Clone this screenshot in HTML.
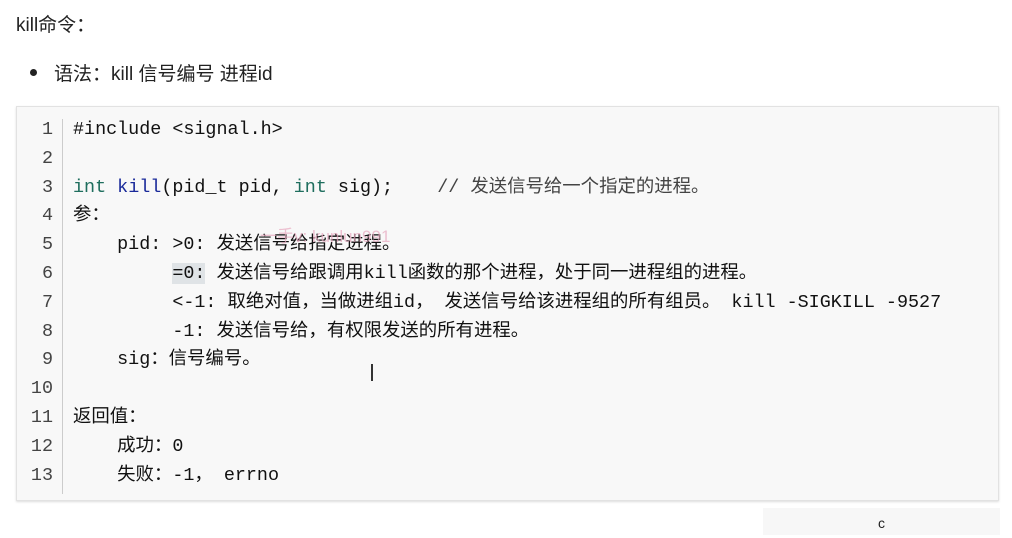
<!DOCTYPE html>
<html><head><meta charset="utf-8"><style>
body{margin:0;width:1012px;height:535px;background:#fff;position:relative;overflow:hidden;font-family:"Liberation Sans","Noto Sans CJK SC",sans-serif;color:#222}
.t{position:absolute;left:16px;top:10px;font-size:19px}
.b{position:absolute;left:30px;top:59px;font-size:19px}
.b:before{content:"";position:absolute;left:0;top:10px;width:7px;height:7px;border-radius:50%;background:#222}
.b span{margin-left:24px}
.code{position:absolute;left:16px;top:106px;width:981px;height:393px;background:#f8f8f8;border:1px solid #e2e2e2;box-shadow:0 1px 2px #ddd}
.gut{position:absolute;left:45px;top:12px;width:1px;height:375px;background:#ccc}
.ln,.lc{position:absolute;font-family:"Liberation Mono","Noto Sans CJK SC",monospace;font-size:18.4px;line-height:28.8px;white-space:pre;top:9px;color:#111}
.ln{left:0;width:36px;text-align:right;color:#444}
.lc{left:56px}
.k{color:#1f6e5e}.f{color:#1a2a9a}.c{color:#444}
.hl{background:#dfe3e6}
.wm{position:absolute;left:260px;top:222px;color:#e7a8bf;font-size:17px;opacity:.7}
.cur{position:absolute;left:371px;top:364px;width:2px;height:17px;background:#333}
.bt{position:absolute;left:763px;top:508px;width:237px;height:27px;background:#f7f7f7;font-size:14px;text-align:center;line-height:30px}
</style></head><body>
<div class="t">kill命令：</div>
<div class="b"><span>语法：kill 信号编号 进程id</span></div>
<div class="code"><div class="gut"></div>
<div class="ln">1
2
3
4
5
6
7
8
9
10
11
12
13</div>
<div class="lc">#include &lt;signal.h&gt;

<span class="k">int</span> <span class="f">kill</span>(pid_t pid, <span class="k">int</span> sig);    <span class="c">// 发送信号给一个指定的进程。</span>
参：
    pid: &gt;0: 发送信号给指定进程。
         <span class="hl">=0:</span> 发送信号给跟调用kill函数的那个进程，处于同一进程组的进程。
         &lt;-1: 取绝对值，当做进组id， 发送信号给该进程组的所有组员。 kill -SIGKILL -9527
         -1: 发送信号给，有权限发送的所有进程。
    sig：信号编号。

返回值：
    成功：0
    失败：-1， errno</div></div>
<div class="wm">一手v: kunlun991</div>
<div class="cur"></div>
<div class="bt">c</div>
</body></html>
